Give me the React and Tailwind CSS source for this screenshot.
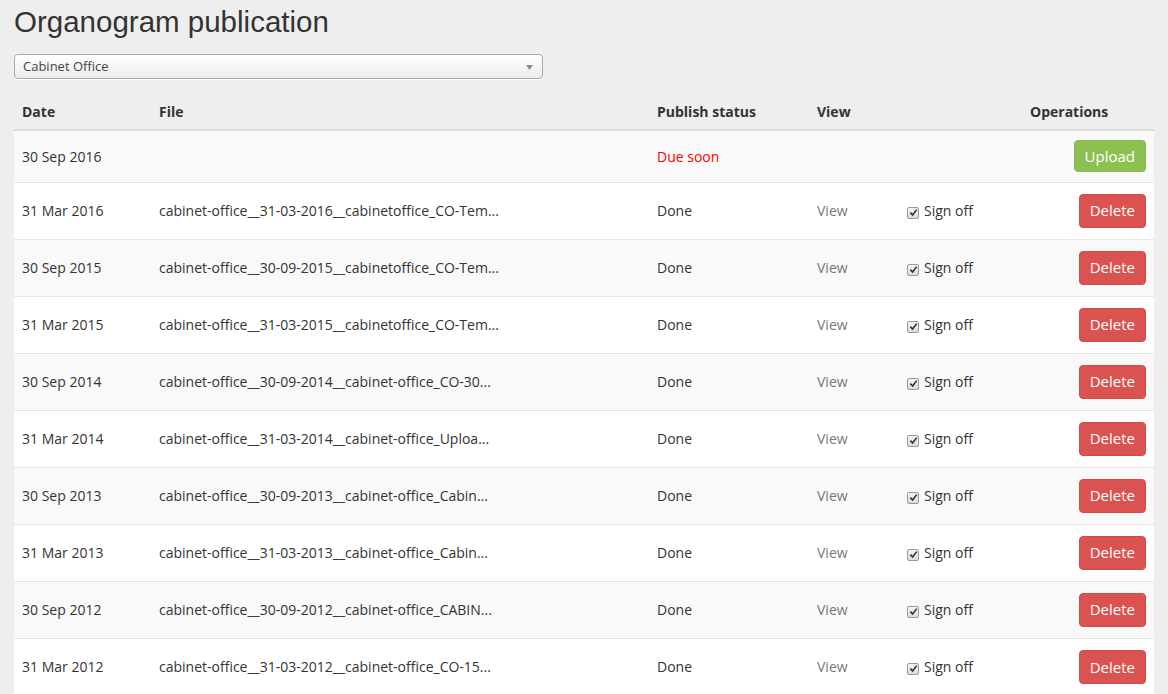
import React from "react";

const rows = [
  ["31 Mar 2016", "cabinet-office__31-03-2016__cabinetoffice_CO-Tem..."],
  ["30 Sep 2015", "cabinet-office__30-09-2015__cabinetoffice_CO-Tem..."],
  ["31 Mar 2015", "cabinet-office__31-03-2015__cabinetoffice_CO-Tem..."],
  ["30 Sep 2014", "cabinet-office__30-09-2014__cabinet-office_CO-30..."],
  ["31 Mar 2014", "cabinet-office__31-03-2014__cabinet-office_Uploa..."],
  ["30 Sep 2013", "cabinet-office__30-09-2013__cabinet-office_Cabin..."],
  ["31 Mar 2013", "cabinet-office__31-03-2013__cabinet-office_Cabin..."],
  ["30 Sep 2012", "cabinet-office__30-09-2012__cabinet-office_CABIN..."],
  ["31 Mar 2012", "cabinet-office__31-03-2012__cabinet-office_CO-15..."],
];

function CheckBox() {
  return (
    <span className="inline-flex items-center justify-center align-[-1px] mr-[5px] w-[12px] h-[12px] border border-[#9a9a9a] rounded-[2px] bg-gradient-to-b from-[#f4f4f4] to-[#dcdcdc]">
      <svg viewBox="0 0 10 10" className="w-[9px] h-[9px]">
        <path d="M1.5 5.2 L4 7.8 L8.6 1.8" fill="none" stroke="#333" strokeWidth="1.8" />
      </svg>
    </span>
  );
}

export default function App() {
  return (
    <div className="min-h-[694px] bg-[#eeeeee] px-[14px] pt-[4px] text-[14px] text-[#333]" style={{ fontFamily: '"Open Sans", sans-serif' }}>
      <h1 className="text-[29.5px] leading-[36px] font-normal text-[#333]" style={{ fontFamily: '"Liberation Sans", Arial, sans-serif' }}>
        Organogram publication
      </h1>

      <div className="mt-[14px] w-[529px] h-[25px] border border-[#aaa] rounded-[4px] bg-gradient-to-b from-white to-[#ececec] flex items-center justify-between pl-[8px] pr-[9px] pt-[1px] shadow-[0_1px_0_#fff]">
        <span className="text-[13px] text-[#444]">Cabinet Office</span>
        <svg viewBox="0 0 8 6" className="w-[7px] h-[5px]">
          <path d="M0 0 H8 L4 6 Z" fill="#888" />
        </svg>
      </div>

      <table className="mt-[15px] w-[1140px] table-fixed border-collapse">
        <colgroup>
          <col className="w-[137px]" />
          <col className="w-[498px]" />
          <col className="w-[160px]" />
          <col className="w-[90px]" />
          <col className="w-[123px]" />
          <col className="w-[132px]" />
        </colgroup>
        <thead>
          <tr className="h-[36px] border-b-2 border-[#dddddd] text-left font-bold">
            <th className="px-[8px]">Date</th>
            <th className="px-[8px]">File</th>
            <th className="px-[8px]">Publish status</th>
            <th className="px-[8px]">View</th>
            <th className="px-[8px]"></th>
            <th className="px-[8px]">Operations</th>
          </tr>
        </thead>
        <tbody>
          <tr className="h-[52px] bg-[#f9f9f9]">
            <td className="px-[8px]">30 Sep 2016</td>
            <td className="px-[8px]"></td>
            <td className="px-[8px] text-[#ff0000]">Due soon</td>
            <td className="px-[8px]"></td>
            <td className="px-[8px]"></td>
            <td className="px-[8px] text-right">
              <button className="h-[32px] px-[10px] rounded-[4px] bg-[#8cc152] text-white text-[15px] border border-[#86bb4d]">Upload</button>
            </td>
          </tr>
          {rows.map(([date, file], i) => (
            <tr key={date} className={`h-[57px] border-t border-[#e6e6e6] ${i % 2 === 0 ? "bg-white" : "bg-[#f9f9f9]"}`}>
              <td className="px-[8px]">{date}</td>
              <td className="px-[8px] whitespace-nowrap">{file}</td>
              <td className="px-[8px]">Done</td>
              <td className="px-[8px] text-[#777]">View</td>
              <td className="px-[8px] whitespace-nowrap">
                <CheckBox />
                Sign off
              </td>
              <td className="px-[8px] text-right">
                <button className="h-[34px] px-[10px] rounded-[4px] bg-[#da5350] text-white text-[15px] border border-[#d14c49]">Delete</button>
              </td>
            </tr>
          ))}
        </tbody>
      </table>
    </div>
  );
}
